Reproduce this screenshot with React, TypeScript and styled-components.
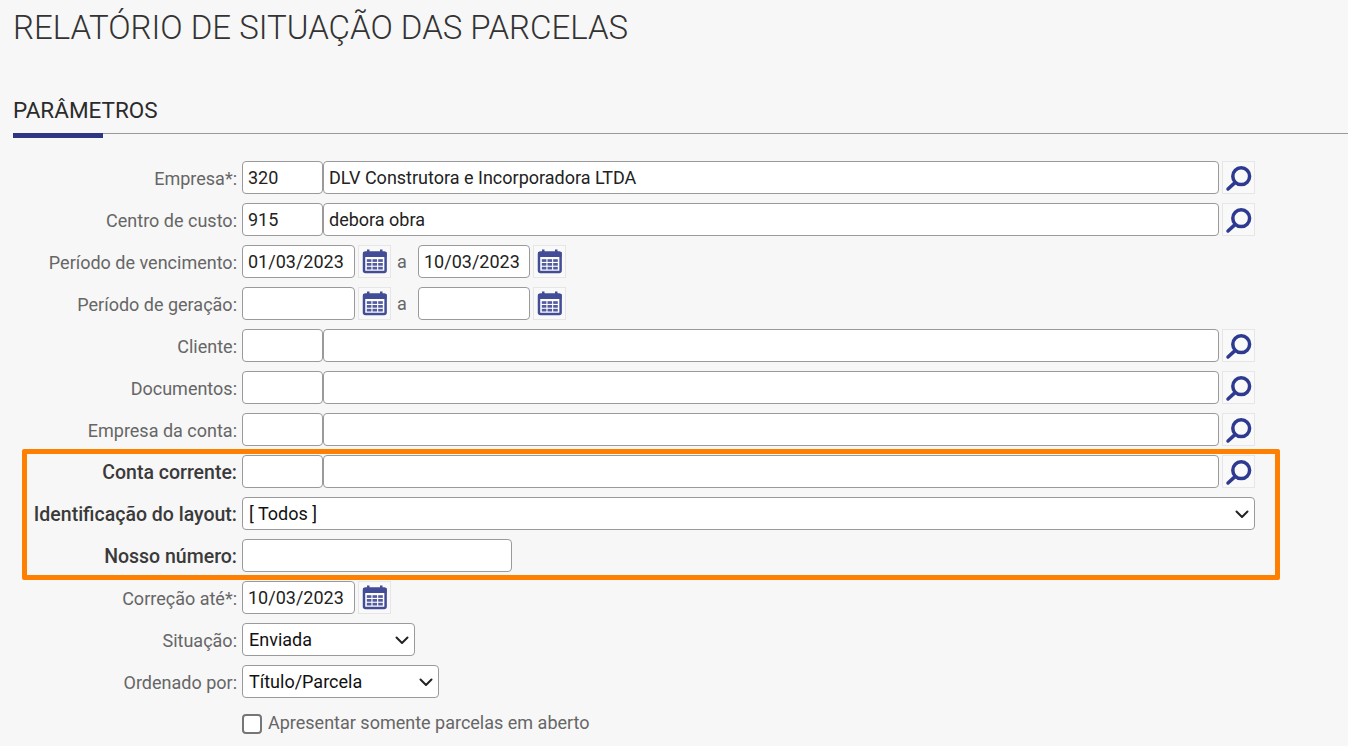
import React from 'react';
import styled, { createGlobalStyle } from 'styled-components';

const Global = createGlobalStyle`
  html, body { margin: 0; padding: 0; background: #f7f7f7; overflow: hidden; }
  body { font-family: Roboto, "Liberation Sans", sans-serif; }
`;
const Page = styled.div`
  height: 746px;
  overflow: hidden;
  padding: 0 0 0 13px;
  box-sizing: border-box;
`;
const Title = styled.h1`
  margin: 0;
  padding-top: 9px;
  font-size: 33px;
  line-height: 38px;
  font-weight: 300;
  color: #333;
  white-space: nowrap;
`;
const SectionHeader = styled.div`
  margin-top: 49px;
  padding-top: 1px;
  height: 36px;
  border-bottom: 1px solid #9a9a9a;
  position: relative;
`;
const SectionTitle = styled.h2`
  margin: 0;
  font-size: 22.5px;
  line-height: 26px;
  font-weight: 400;
  color: #2b2b2b;
`;
const SectionBar = styled.span`
  position: absolute;
  left: 0;
  bottom: -5px;
  width: 90px;
  height: 5px;
  background: #2e3583;
`;
const Form = styled.div`
  margin-top: 27px;
  display: flex;
  flex-direction: column;
  gap: 9px;
`;
const Row = styled.div`
  display: flex;
  align-items: center;
  height: 33px;
`;
const Label = styled.label<{ $width?: number; $strong?: boolean }>`
  width: ${p => p.$width ?? 224}px;
  flex: none;
  margin-right: 5px;
  padding-top: 1px;
  text-align: right;
  font-size: ${p => (p.$strong ? 19.5 : 18)}px;
  white-space: nowrap;
  color: ${p => (p.$strong ? '#3a3a3a' : '#666')};
  font-weight: ${p => (p.$strong ? 500 : 400)};
`;
const Field = styled.div<{ $w: number }>`
  width: ${p => p.$w}px;
  height: 33px;
  flex: none;
  box-sizing: border-box;
  background: #fff;
  border: 1px solid #9a9a9a;
  border-radius: 4px;
  padding: 1px 5px 0;
  font-size: 18px;
  line-height: 30px;
  color: #222;
  white-space: nowrap;
  overflow: hidden;
`;
const SelectBox = styled(Field)`
  display: flex;
  align-items: center;
  justify-content: space-between;
  padding: 0 4px 0 6px;
  color: #111;
  svg { flex: none; }
`;
const IconButton = styled.button`
  width: 33px;
  height: 33px;
  flex: none;
  margin-left: 3px;
  padding: 0;
  box-sizing: border-box;
  background: #f9f9f9;
  border: 1px solid #e6e6e6;
  display: flex;
  align-items: center;
  justify-content: center;
`;
const Separator = styled.span`
  width: 27px;
  flex: none;
  box-sizing: border-box;
  padding-left: 6px;
  font-size: 18px;
  color: #666;
`;
const Highlight = styled.div`
  margin: -6px 0 -8px 9px;
  width: 1258px;
  box-sizing: border-box;
  border: 5px solid #ff8000;
  border-radius: 2px;
  padding: 1px 0 3px;
  display: flex;
  flex-direction: column;
  gap: 9px;
`;
const CheckRow = styled.div`
  display: flex;
  align-items: center;
  margin-left: 229px;
  height: 33px;
`;
const Check = styled.span`
  width: 20px;
  height: 20px;
  box-sizing: border-box;
  flex: none;
  background: #fff;
  border: 2px solid #767676;
  border-radius: 4px;
`;
const CheckText = styled.span`
  margin: -3px 0 0 6px;
  font-size: 18px;
  color: #666;
  white-space: nowrap;
`;

const Search = () => (
  <svg width="31" height="31" viewBox="0 0 31 31" fill="none" stroke="#2e3a90" strokeWidth="3.5" strokeLinecap="round">
    <circle cx="18.2" cy="14.2" r="8.4" />
    <path d="M12 20.6 5 27" />
  </svg>
);
const Calendar = () => (
  <svg width="31" height="31" viewBox="0 0 31 31">
    <rect x="5" y="6.5" width="21.6" height="19.5" rx="1.5" fill="#fff" stroke="#434c96" strokeWidth="2.5" />
    <rect x="4" y="6" width="23.6" height="5" fill="#434c96" />
    <rect x="8" y="3.5" width="2.5" height="4" fill="#434c96" />
    <rect x="21" y="3.5" width="2.5" height="4" fill="#434c96" />
    {[13.2, 17, 20.8].map(y =>
      [7.8, 13.5, 19.2].map(x => <rect key={`${x}-${y}`} x={x} y={y} width="4.6" height="2.7" fill="#535ba0" />)
    )}
  </svg>
);
const Chevron = () => (
  <svg width="16" height="16" viewBox="0 0 16 16" fill="none" stroke="#222" strokeWidth="2" strokeLinecap="round" strokeLinejoin="round">
    <path d="M2.5 5.5 8 11l5.5-5.5" />
  </svg>
);

const LookupRow = ({ label, code = '', name = '', strong, width }: { label: string; code?: string; name?: string; strong?: boolean; width?: number }) => (
  <Row>
    <Label $strong={strong} $width={width}>{label}</Label>
    <Field $w={81}>{code}</Field>
    <Field $w={896}>{name}</Field>
    <IconButton><Search /></IconButton>
  </Row>
);
const DateRow = ({ label, from = '', to = '' }: { label: string; from?: string; to?: string }) => (
  <Row>
    <Label>{label}</Label>
    <Field $w={113}>{from}</Field>
    <IconButton><Calendar /></IconButton>
    <Separator>a</Separator>
    <Field $w={112}>{to}</Field>
    <IconButton><Calendar /></IconButton>
  </Row>
);
const SelectRow = ({ label, value, w, strong, width }: { label: string; value: string; w: number; strong?: boolean; width?: number }) => (
  <Row>
    <Label $strong={strong} $width={width}>{label}</Label>
    <SelectBox $w={w}>{value}<Chevron /></SelectBox>
  </Row>
);

export default function App() {
  return (
    <Page>
      <Global />
      <Title>RELATÓRIO DE SITUAÇÃO DAS PARCELAS</Title>
      <SectionHeader>
        <SectionTitle>PARÂMETROS</SectionTitle>
        <SectionBar />
      </SectionHeader>
      <Form>
        <LookupRow label="Empresa*:" code="320" name="DLV Construtora e Incorporadora LTDA" />
        <LookupRow label="Centro de custo:" code="915" name="debora obra" />
        <DateRow label="Período de vencimento:" from="01/03/2023" to="10/03/2023" />
        <DateRow label="Período de geração:" />
        <LookupRow label="Cliente:" />
        <LookupRow label="Documentos:" />
        <LookupRow label="Empresa da conta:" />
        <Highlight>
          <LookupRow label="Conta corrente:" strong width={210} />
          <SelectRow label="Identificação do layout:" value="[ Todos ]" w={1013} strong width={210} />
          <Row>
            <Label $strong $width={210}>Nosso número:</Label>
            <Field $w={270} />
          </Row>
        </Highlight>
        <Row>
          <Label>Correção até*:</Label>
          <Field $w={113}>10/03/2023</Field>
          <IconButton><Calendar /></IconButton>
        </Row>
        <SelectRow label="Situação:" value="Enviada" w={173} />
        <SelectRow label="Ordenado por:" value="Título/Parcela" w={197} />
        <CheckRow>
          <Check />
          <CheckText>Apresentar somente parcelas em aberto</CheckText>
        </CheckRow>
      </Form>
    </Page>
  );
}
